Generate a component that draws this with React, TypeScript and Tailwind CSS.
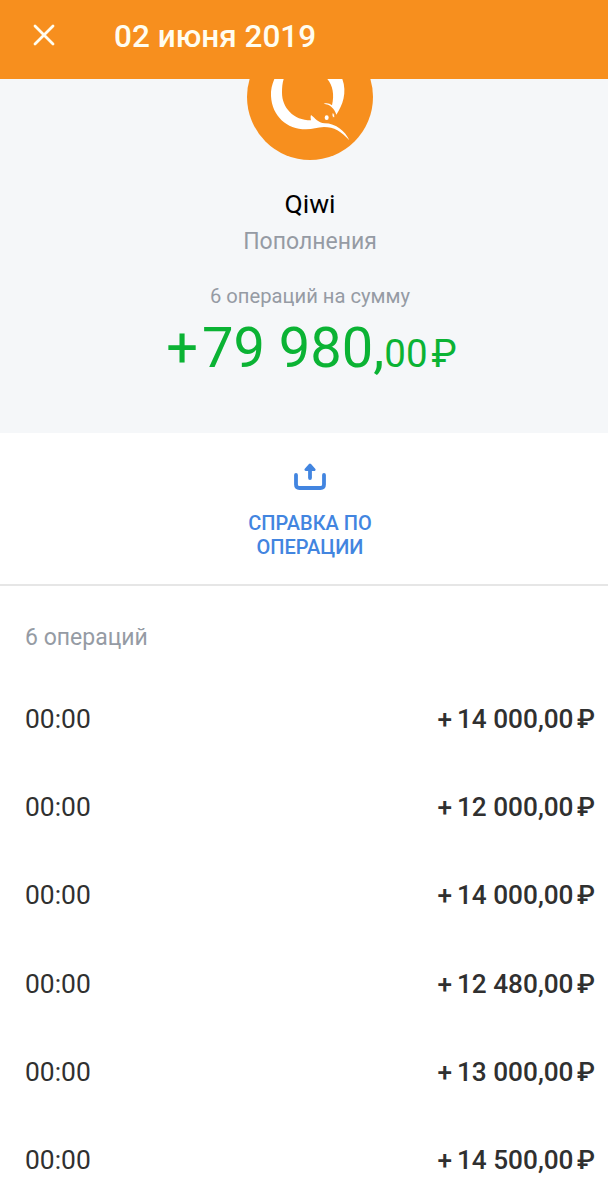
import React from "react";

const operations = [
  { time: "00:00", amount: "14 000,00" },
  { time: "00:00", amount: "12 000,00" },
  { time: "00:00", amount: "14 000,00" },
  { time: "00:00", amount: "12 480,00" },
  { time: "00:00", amount: "13 000,00" },
  { time: "00:00", amount: "14 500,00" },
];

function QiwiLogo() {
  return (
    <svg className="block h-[81px] w-[126px]" viewBox="51 27 378 243">
      <circle cx="240" cy="81" r="189" fill="#f78f1e" />
      <path
        fill="#fff"
        d="M133 27C126 44 122 60 123 78C126 138 170 178 228 178C248 178 262 172 282 171C312 171 334 184 358 211C346 184 318 160 284 160C264 158 256 145 243 135C241 140 242 145 243 151C190 151 156 112 156 68C156 52 157 40 161 27Z"
      />
      <path fill="#fff" d="M292 27C308 45 314 75 306 106C299 100 291 98 281 101C300 103 314 115 319 134C338 106 352 68 337 27Z" />
      <ellipse cx="310" cy="136" rx="3.5" ry="7" transform="rotate(-15 310 136)" fill="#fff" stroke="#f78f1e" strokeWidth="2" />
      <ellipse cx="290" cy="143" rx="6" ry="7" fill="#fff" />
    </svg>
  );
}

export default function App() {
  return (
    <div className="h-[1200px] w-[608px] overflow-hidden bg-white font-['Roboto',sans-serif]">
      <header className="flex h-[79px] items-start bg-[#f78f1e] pl-[33px] pt-[16px] text-[#fffdf0]">
        <svg className="mt-[8px] h-[22px] w-[22px] shrink-0" viewBox="0 0 22 22" fill="none" stroke="currentColor" strokeWidth="2.8" strokeLinecap="round">
          <path d="M2 2L20 20M20 2L2 20" />
        </svg>
        <h1 className="ml-[59px] mt-px text-[31.5px] font-medium leading-[40px]">02 июня 2019</h1>
      </header>

      <section className="flex h-[354px] flex-col items-center bg-[#f5f7f9] pl-[12px]">
        <QiwiLogo />
        <div className="mt-[28px] text-[26.5px] leading-[32px] text-black">Qiwi</div>
        <div className="mt-[8px] text-[23px] leading-[28px] text-[#959ba4]">Пополнения</div>
        <div className="mt-[28px] text-[20.2px] leading-[24px] text-[#959ba4]">6 операций на сумму</div>
        <div className="mt-[8px] whitespace-nowrap pl-[3px] text-[56px] leading-[64px] text-[#0bb334]">
          <span>+</span>
          <span className="ml-[4px]">79 980,</span>
          <span className="text-[38.5px]">00</span>
          <span className="ml-[4px] text-[38px]">₽</span>
        </div>
      </section>

      <section className="flex h-[153px] flex-col items-center border-b-2 border-[#e6e6e6] pl-[12px] pt-[30px] text-[#4285e0]">
        <svg className="block h-[28px] w-[34px]" viewBox="0 0 34 28" fill="none" stroke="currentColor" strokeWidth="3.8" strokeLinecap="round" strokeLinejoin="round">
          <path d="M3 12V21.5Q3 25 6.5 25H27.5Q31 25 31 21.5V12" />
          <path d="M17 15V4" />
          <path d="M12.8 6.6L17 2L21.2 6.6Z" fill="currentColor" strokeWidth="2.8" />
        </svg>
        <div className="mt-[20px] text-center text-[20px] font-medium leading-[24px]">
          СПРАВКА ПО
          <br />
          ОПЕРАЦИИ
        </div>
      </section>

      <section className="pt-[37px]">
        <h2 className="pl-[25px] text-[23px] leading-[30px] text-[#959ba4]">6 операций</h2>
        <div className="mt-[22px]">
          {operations.map((op, i) => (
            <div key={i} className="flex h-[88.2px] items-center justify-between pl-[25px] pr-[13px] text-[26.2px] leading-[32px] text-[#303030]">
              <span className="text-[26.4px]">{op.time}</span>
              <span className="flex font-medium">
                <span>+</span>
                <span className="ml-[5px]">{op.amount}</span>
                <span className="ml-[3.5px]">₽</span>
              </span>
            </div>
          ))}
        </div>
      </section>
    </div>
  );
}
